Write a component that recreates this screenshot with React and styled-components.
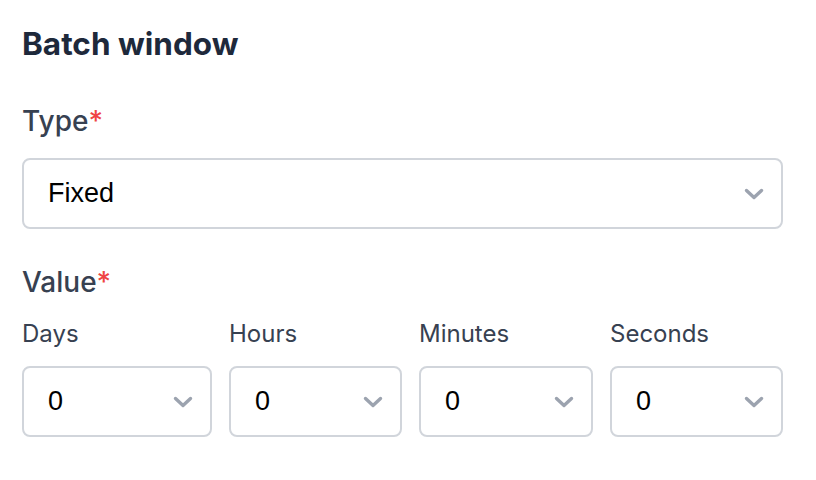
import React from "react";
import styled, { createGlobalStyle } from "styled-components";

const GlobalStyle = createGlobalStyle`
  body {
    margin: 0;
    background: #ffffff;
    font-family: Inter, "Noto Sans", sans-serif;
  }
`;

const units = [
  { id: "days", label: "Days" },
  { id: "hours", label: "Hours" },
  { id: "minutes", label: "Minutes" },
  { id: "seconds", label: "Seconds" },
];

function Chevron() {
  return (
    <svg width="20" height="12" viewBox="0 0 20 12" fill="none">
      <path
        d="M2.5 2.5L10 9.5L17.5 2.5"
        stroke="#9ca3af"
        strokeWidth="3.4"
        strokeLinecap="round"
        strokeLinejoin="round"
      />
    </svg>
  );
}

function Select({ value }) {
  return (
    <SelectBox>
      <span>{value}</span>
      <Chevron />
    </SelectBox>
  );
}

function App() {
  return (
    <Wrapper>
      <GlobalStyle />
      <Title>Batch window</Title>

      <Label>
        Type<Required>*</Required>
      </Label>
      <Select value="Fixed" />

      <Label className="value-label">
        Value<Required>*</Required>
      </Label>
      <UnitGrid>
        {units.map((unit) => {
          return (
            <div key={unit.id}>
              <SubLabel>{unit.label}</SubLabel>
              <Select value="0" />
            </div>
          );
        })}
      </UnitGrid>
    </Wrapper>
  );
}

const Wrapper = styled.div`
  width: 761px;
  padding: 24px 22px;
  .value-label {
    margin-top: 35px;
    margin-bottom: 18px;
  }
`;

const Title = styled.h2`
  margin: 0 0 39px;
  font-size: 31.5px;
  line-height: 40px;
  font-weight: 700;
  color: #1e293b;
`;

const Label = styled.div`
  font-size: 28px;
  line-height: 36px;
  font-weight: 500;
  color: #374151;
  margin-bottom: 19px;
`;

const Required = styled.span`
  color: #ef4444;
`;

const SelectBox = styled.div`
  height: 71px;
  box-sizing: border-box;
  border: 2px solid #d1d5db;
  border-radius: 8px;
  display: flex;
  align-items: center;
  justify-content: space-between;
  padding: 0 17px 0 24px;
  font-family: "Liberation Sans", Arial, sans-serif;
  font-size: 27px;
  color: #000000;
`;

const UnitGrid = styled.div`
  display: grid;
  grid-template-columns: 190px 173px 174px 173px;
  column-gap: 17px;
`;

const SubLabel = styled.div`
  font-size: 24px;
  line-height: 32px;
  font-weight: 400;
  color: #374151;
  margin-bottom: 16px;
`;

export default App;
